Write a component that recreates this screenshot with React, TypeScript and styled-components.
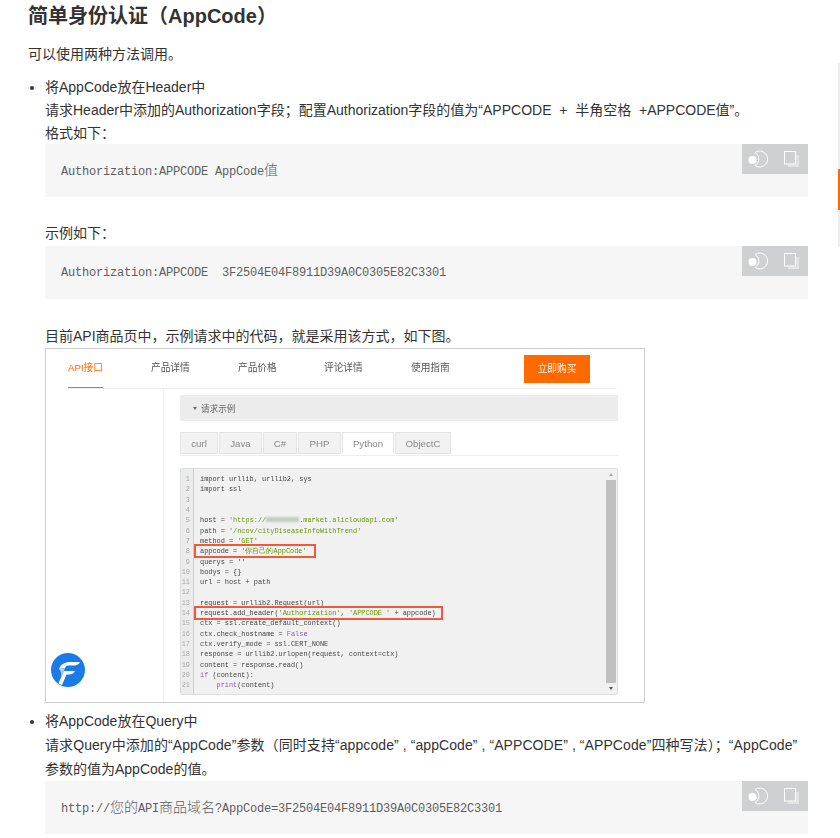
import React from 'react'
import styled, { createGlobalStyle } from 'styled-components'

const GlobalStyle = createGlobalStyle`
  html, body {
    margin: 0;
    padding: 0;
    background: #fff;
    overflow: hidden;
  }
  body {
    font-family: "Liberation Sans", "Noto Sans CJK SC", sans-serif;
    font-size: 14px;
    color: #333;
  }
`

const Page = styled.div`
  width: 780px;
  height: 838px;
  padding-left: 28px;
  overflow: hidden;
`

const Heading = styled.h2`
  margin: 0;
  font-size: 20px;
  line-height: 32px;
  font-weight: 700;
  color: #333;
`

const Para = styled.p`
  margin: 11px 0 0;
  line-height: 23px;
`

const List = styled.ul`
  margin: 10px 0 0;
  padding: 0 0 0 17px;
  list-style: disc;
`

const Item = styled.li<{ $gap?: number; $lh: number }>`
  line-height: ${(p) => p.$lh}px;
  margin-top: ${(p) => p.$gap || 0}px;
`

const Line = styled.div<{ $top?: number; $ls?: number }>`
  margin-top: ${(p) => p.$top || 0}px;
  letter-spacing: ${(p) => p.$ls || 0}px;
  white-space: nowrap;
`

const CodeBlock = styled.div<{ $top?: number; $nudge?: boolean }>`
  position: relative;
  box-sizing: border-box;
  height: 53px;
  margin-top: ${(p) => p.$top || 0}px;
  background: #f6f6f6;
  display: flex;
  align-items: center;
  padding-left: 16px;
  padding-top: ${(p) => (p.$nudge ? 2 : 0)}px;
  font-family: "Liberation Mono", "Noto Sans CJK SC", monospace;
  font-size: 12px;
  letter-spacing: -0.2px;
  color: #5e5e5e;
  white-space: pre;
`

const Cjk = styled.span`
  font-family: "Noto Sans CJK SC", sans-serif;
  font-size: 14px;
  letter-spacing: 0;
  font-weight: 300;
`

const Num = styled.span`
  color: #a0522d;
`

const Tools = styled.div`
  position: absolute;
  top: 0;
  right: 0;
  width: 66px;
  height: 30px;
  background: #cfd0d1;
  display: flex;
  align-items: center;
  padding-left: 6px;
  gap: 14px;
  box-sizing: border-box;
`

const Scrollbar = styled.div`
  position: fixed;
  top: 63px;
  right: 0;
  width: 2px;
  height: 184px;
  background: #eeeeee;
`

const ScrollThumb = styled.div`
  position: absolute;
  top: 106px;
  left: 0;
  width: 2px;
  height: 41px;
  background: #ff6a00;
`

/* the embedded screenshot */
const Shot = styled.div`
  position: relative;
  width: 598px;
  height: 353px;
  border: 1px solid #cdcdcd;
  background: #fff;
  display: flex;
  flex-direction: column;
  overflow: hidden;
  filter: blur(0.25px);
  line-height: normal;
`

const ShotNav = styled.div`
  height: 39px;
  margin: 0 27px 0 22px;
  border-bottom: 1px solid #eeeeee;
  display: flex;
  align-items: center;
  font-size: 9.7px;
  color: #555;
  flex-shrink: 0;
`

const NavTab = styled.div<{ $w: number; $active?: boolean }>`
  width: ${(p) => p.$w}px;
  height: 39px;
  line-height: 37px;
  flex-shrink: 0;
  color: ${(p) => (p.$active ? '#ff6a00' : '#555')};
`

const NavActive = styled.span`
  display: inline-block;
  height: 38px;
  border-bottom: 1px solid #ff6a00;
`

const BuyButton = styled.div`
  width: 66px;
  height: 28px;
  background: #ff6a00;
  color: #fff;
  text-align: center;
  line-height: 28px;
  flex-shrink: 0;
`

const ShotBody = styled.div`
  flex: 1;
  display: flex;
`

const ShotSide = styled.div`
  width: 117px;
  border-right: 1px solid #eeeeee;
  flex-shrink: 0;
`

const ShotMain = styled.div`
  width: 438px;
  margin-left: 16px;
  padding-top: 6px;
`

const SectionBar = styled.div`
  height: 26px;
  background: #ececec;
  display: flex;
  align-items: center;
  padding-left: 13px;
  gap: 4px;
  font-size: 8.6px;
  color: #666;
`

const Caret = styled.span`
  width: 0;
  height: 0;
  border-left: 2.5px solid transparent;
  border-right: 2.5px solid transparent;
  border-top: 3px solid #666;
`

const LangTabs = styled.div`
  display: flex;
  gap: 1px;
  margin-top: 11px;
  height: 23px;
  border-bottom: 1px solid #eeeeee;
`

const LangTab = styled.div<{ $w: number; $active?: boolean }>`
  width: ${(p) => p.$w}px;
  height: 22px;
  box-sizing: border-box;
  border: 1px solid #e4e4e4;
  background: ${(p) => (p.$active ? '#fff' : '#f2f2f2')};
  border-bottom-color: ${(p) => (p.$active ? '#fff' : '#e4e4e4')};
  text-align: center;
  font-size: 9.7px;
  line-height: 21px;
  color: #888;
`

const Editor = styled.div`
  margin-top: 12px;
  height: 227px;
  box-sizing: border-box;
  border: 1px solid #dcdfdf;
  border-radius: 2px;
  background: #f1f1f1;
  display: flex;
  position: relative;
`

const Gutter = styled.div`
  width: 13px;
  padding: 5px 3px 0 0;
  box-sizing: border-box;
  border-right: 1px solid #c9d0d3;
  background: #ececec;
  text-align: right;
  font-family: "Liberation Mono", monospace;
  font-size: 6.9px;
  line-height: 10.32px;
  color: #aaa;
  flex-shrink: 0;
`

const CodeArea = styled.div`
  padding: 5px 0 0 6px;
  font-family: "Liberation Mono", monospace;
  font-size: 6.9px;
  line-height: 10.32px;
  color: #444;
  white-space: pre;
`

const CodeRow = styled.div`
  position: relative;
  height: 10.32px;
`

const Str = styled.span`
  color: #669900;
`

const Kw = styled.span`
  color: #8a5cb0;
`

const Smudge = styled.span`
  display: inline-block;
  width: 33px;
  height: 5px;
  background: #c3ccc0;
  filter: blur(1px);
`

const Mark = styled.span<{ $w: number }>`
  position: absolute;
  top: -2.5px;
  left: -6px;
  width: ${(p) => p.$w}px;
  height: 14px;
  box-sizing: border-box;
  border: 2px solid #ef5a3c;
`

const EditorBar = styled.div`
  position: absolute;
  top: 0;
  bottom: 0;
  right: 1px;
  width: 10px;
  display: flex;
  flex-direction: column;
  align-items: center;
`

const BarArrow = styled.span<{ $up?: boolean }>`
  width: 0;
  height: 0;
  margin: 4px 0;
  border-left: 2.5px solid transparent;
  border-right: 2.5px solid transparent;
  border-top: ${(p) => (p.$up ? '0' : '3px solid #555')};
  border-bottom: ${(p) => (p.$up ? '3px solid #aaa' : '0')};
`

const BarThumb = styled.div`
  width: 10px;
  flex: 1;
  background: #c0c0c0;
`

const LogoBadge = styled.svg`
  position: absolute;
  left: 5px;
  top: 304px;
`

const ToolIcons = () => (
  <>
    <svg width="22" height="20" viewBox="0 0 22 20" fill="none">
      <circle cx="4.5" cy="11" r="4" fill="#fff" />
      <path d="M7 3.5 A8 8 0 1 1 7 16.5 A7.5 7.5 0 0 0 11 10 A7.5 7.5 0 0 0 7 3.5 Z" stroke="#fff" strokeWidth="1" />
    </svg>
    <svg width="16" height="18" viewBox="0 0 16 18" fill="none">
      <path d="M4 17 H15 V5 H12.5 V14.5 H4 Z" fill="#e3e4e4" />
      <rect x="0.5" y="1.5" width="11" height="12.5" stroke="#fff" strokeWidth="1" />
    </svg>
  </>
)

const Block = ({ top, nudge, children }: { top?: number; nudge?: boolean; children: React.ReactNode }) => (
  <CodeBlock $top={top} $nudge={nudge}>
    <span>{children}</span>
    <Tools>
      <ToolIcons />
    </Tools>
  </CodeBlock>
)

const navTabs = [
  { label: '产品详情', w: 87 },
  { label: '产品价格', w: 86 },
  { label: '评论详情', w: 87 },
  { label: '使用指南', w: 113 },
]

const langTabs = [
  { label: 'curl', w: 38 },
  { label: 'Java', w: 43 },
  { label: 'C#', w: 34 },
  { label: 'PHP', w: 43 },
  { label: 'Python', w: 52, active: true },
  { label: 'ObjectC', w: 56 },
]

const codeLines: React.ReactNode[] = [
  'import urllib, urllib2, sys',
  'import ssl',
  '',
  '',
  <>host = <Str>'https://<Smudge />.market.alicloudapi.com'</Str></>,
  <>path = <Str>'/ncov/cityDiseaseInfoWithTrend'</Str></>,
  <>method = <Str>'GET'</Str></>,
  <><Mark $w={122} />appcode = <Str>'你自己的AppCode'</Str></>,
  "querys = ''",
  'bodys = {}',
  'url = host + path',
  '',
  'request = urllib2.Request(url)',
  <><Mark $w={249} />request.add_header(<Str>'Authorization'</Str>, <Str>'APPCODE '</Str> + appcode)</>,
  'ctx = ssl.create_default_context()',
  <>ctx.check_hostname = <Kw>False</Kw></>,
  'ctx.verify_mode = ssl.CERT_NONE',
  'response = urllib2.urlopen(request, context=ctx)',
  'content = response.read()',
  <><Kw>if</Kw> (content):</>,
  <>    <Kw>print</Kw>(content)</>,
]

const ApiScreenshot = () => (
  <Shot>
    <ShotNav>
      <NavTab $w={83} $active>
        <NavActive>API接口</NavActive>
      </NavTab>
      {navTabs.map((t) => (
        <NavTab key={t.label} $w={t.w}>
          {t.label}
        </NavTab>
      ))}
      <BuyButton>立即购买</BuyButton>
    </ShotNav>
    <ShotBody>
      <ShotSide />
      <ShotMain>
        <SectionBar>
          <Caret />
          请求示例
        </SectionBar>
        <LangTabs>
          {langTabs.map((t) => (
            <LangTab key={t.label} $w={t.w} $active={t.active}>
              {t.label}
            </LangTab>
          ))}
        </LangTabs>
        <Editor>
          <Gutter>
            {codeLines.map((_, i) => (
              <div key={i}>{i + 1}</div>
            ))}
          </Gutter>
          <CodeArea>
            {codeLines.map((line, i) => (
              <CodeRow key={i}>{line}</CodeRow>
            ))}
          </CodeArea>
          <EditorBar>
            <BarArrow $up />
            <BarThumb />
            <BarArrow />
          </EditorBar>
        </Editor>
      </ShotMain>
    </ShotBody>
    <LogoBadge width="34" height="34" viewBox="0 0 34 34">
      <circle cx="17" cy="17" r="17" fill="#1a7ae8" />
      <path d="M8 16 C10 11 14 9 19 9 H29 C28 11 26 12.5 23 12.5 H17 C15 12.5 14.5 14 14 15 Z" fill="#fff" />
      <path d="M13 18 H24 C23 20 21 21.5 18 21.5 H15.5 L11 32 C9.5 31.5 8.5 31 7.5 30 Z" fill="#fff" />
      <path d="M8 16 C10 18 11 21 9.5 25 L13 18 L14 15 Z" fill="#a9d3f7" />
    </LogoBadge>
  </Shot>
)

export default function App() {
  return (
    <>
      <GlobalStyle />
      <Page>
        <Heading>简单身份认证（AppCode）</Heading>
        <Para>可以使用两种方法调用。</Para>
        <List>
          <Item $lh={23}>
            将AppCode放在Header中
            <Line>请求Header中添加的Authorization字段；配置Authorization字段的值为“APPCODE&nbsp;&nbsp;+&nbsp;&nbsp;半角空格&nbsp;&nbsp;+APPCODE值”。</Line>
            <Line>格式如下：</Line>
            <Block top={-1}>Authorization:APPCODE AppCode<Cjk>值</Cjk></Block>
            <Line $top={25}>示例如下：</Line>
            <Block top={1} nudge>Authorization:APPCODE  3F2504E04F8911D39A0C0305E82C3301</Block>
            <Line $top={26}>目前API商品页中，示例请求中的代码，就是采用该方式，如下图。</Line>
            <ApiScreenshot />
          </Item>
          <Item $gap={6} $lh={24}>
            将AppCode放在Query中
            <Line $ls={0.08}>请求Query中添加的“AppCode”参数（同时支持“appcode” , “appCode” , “APPCODE” , “APPCode”四种写法）；“AppCode”</Line>
            <Line>参数的值为AppCode的值。</Line>
            <Block>
              http://<Cjk>您的</Cjk>API<Cjk>商品域名</Cjk>?AppCode=<Num>3</Num>F2504E04F8911D39A0C0305E82C3301
            </Block>
          </Item>
        </List>
      </Page>
      <Scrollbar>
        <ScrollThumb />
      </Scrollbar>
    </>
  )
}
